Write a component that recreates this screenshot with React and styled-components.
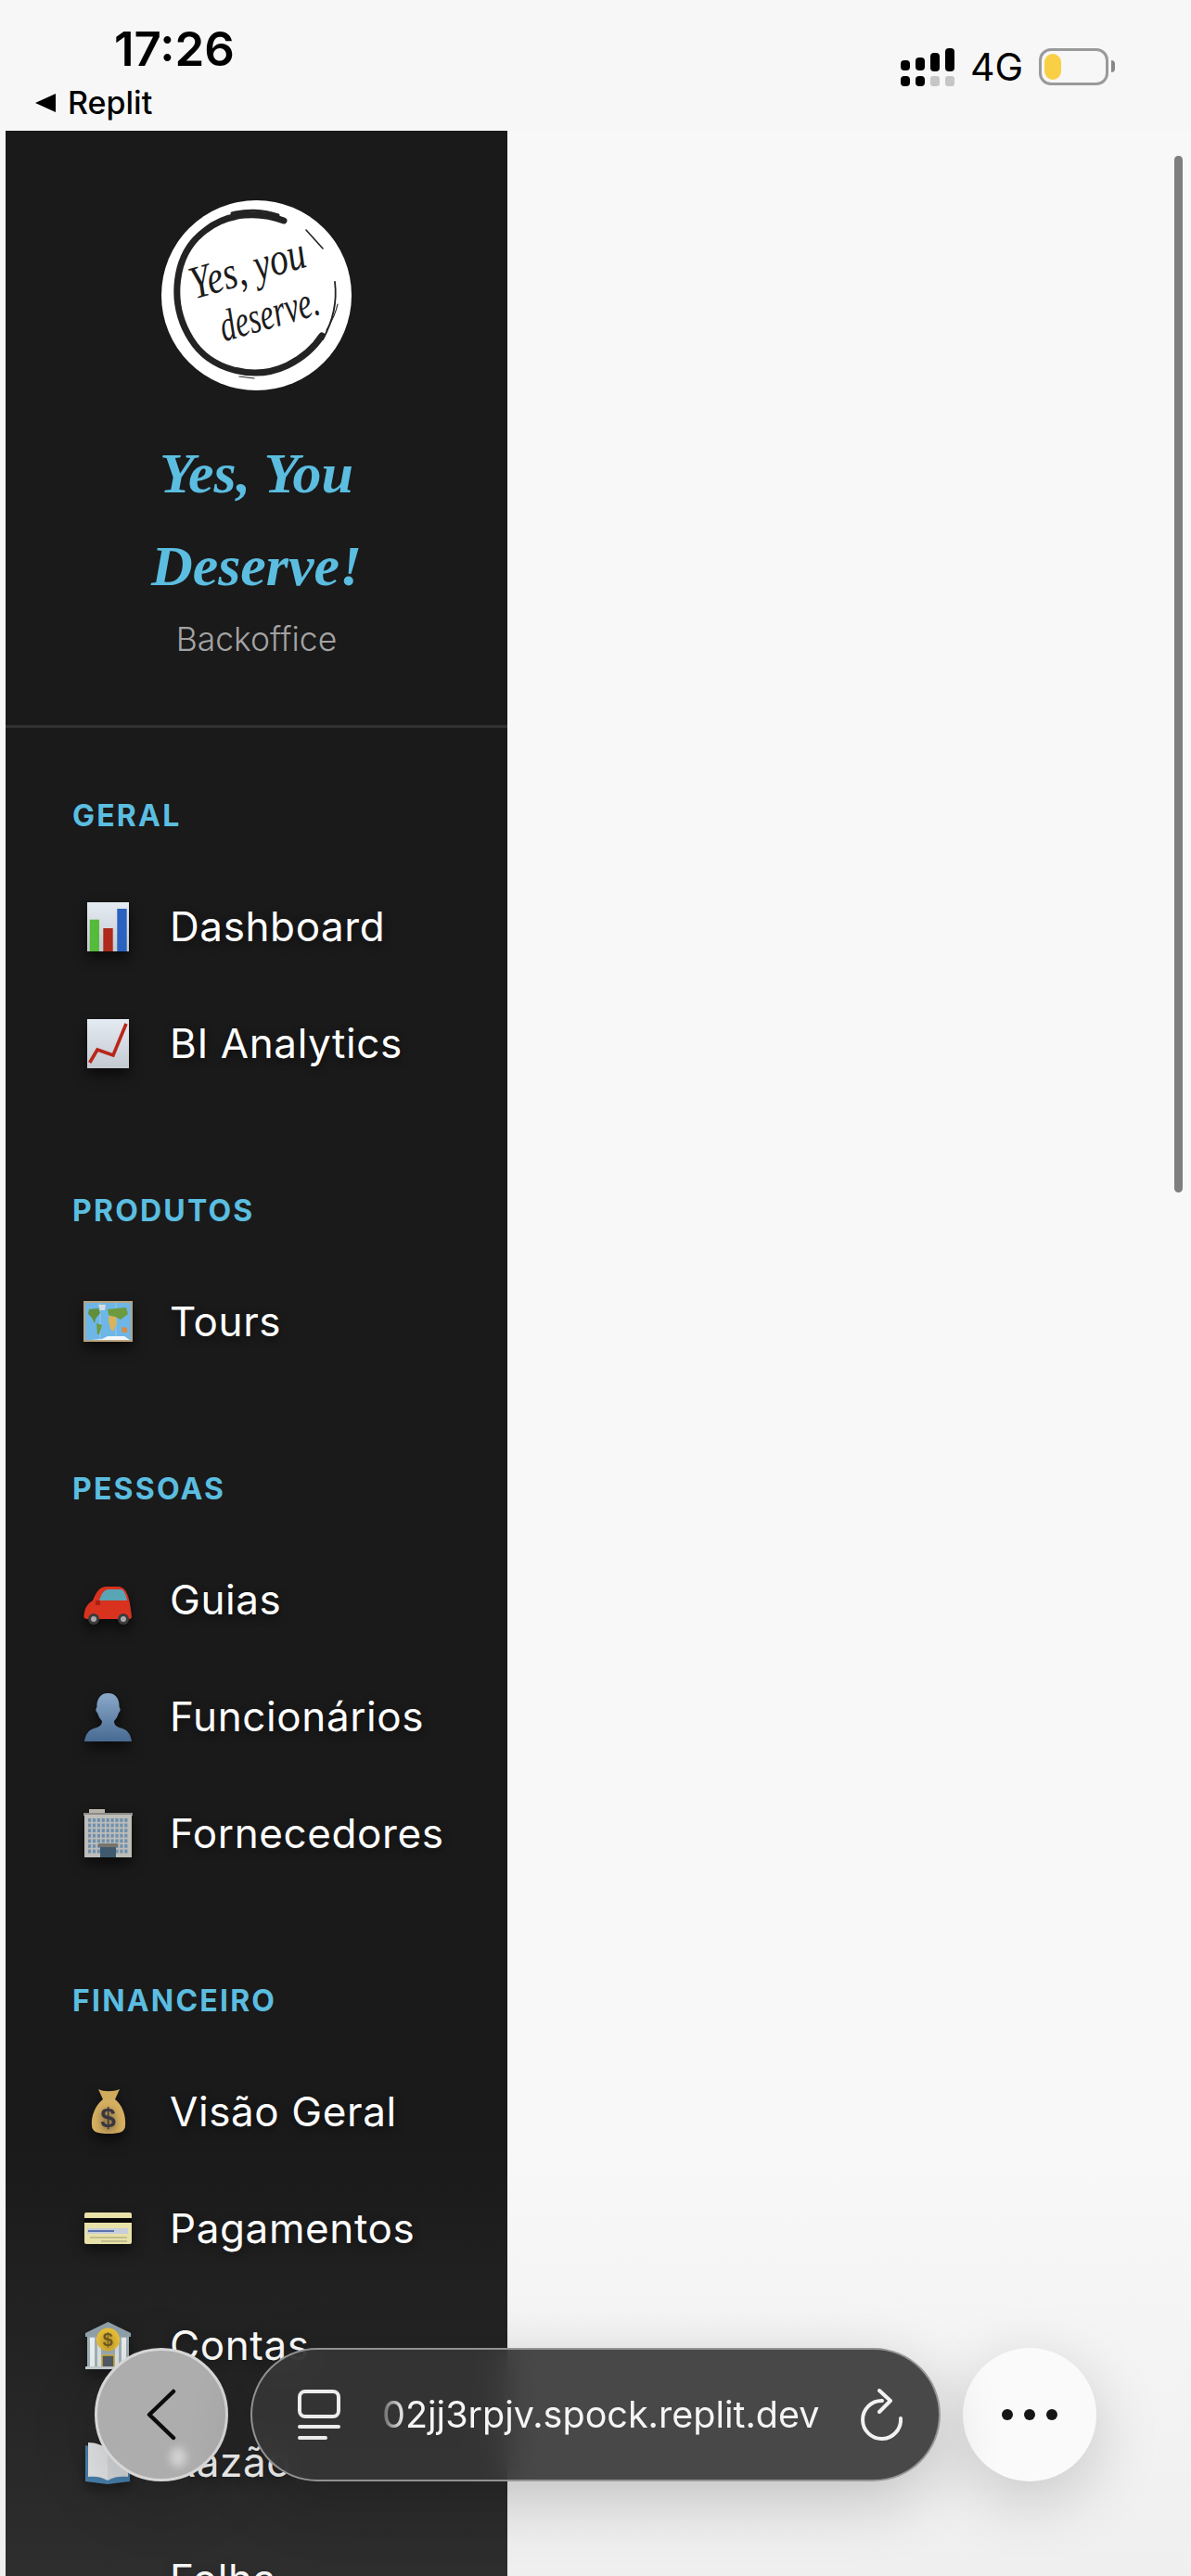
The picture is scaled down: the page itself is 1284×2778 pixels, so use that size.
import React from "react";
import styled, { createGlobalStyle } from "styled-components";

const ACCENT = "#5bbde0";
const SANS = `"Inter", "Liberation Sans", sans-serif`;

const Global = createGlobalStyle`
	html, body {
		margin: 0;
		padding: 0;
		background: #f8f8f8;
	}
	* {
		box-sizing: border-box;
	}
`;

const Page = styled.div`
	position: relative;
	width: 1284px;
	height: 2778px;
	overflow: hidden;
	background: #f8f8f8;
	font-family: ${SANS};
`;

const StatusBar = styled.header`
	display: flex;
	justify-content: space-between;
	height: 141px;
	background: #f7f7f7;
	color: #000;
`;

const StatusLeft = styled.div`
	display: flex;
	flex-direction: column;
	padding: 22px 0 0 38px;
`;

const Clock = styled.div`
	margin-left: 85px;
	font-size: 51px;
	line-height: 62px;
	font-weight: 600;
`;

const BackLink = styled.div`
	display: flex;
	align-items: center;
	gap: 13px;
	margin-top: -1px;
	font-size: 34px;
	line-height: 56px;
	font-weight: 500;
`;

const BackArrow = styled.span`
	width: 0;
	height: 0;
	border-style: solid;
	border-width: 10px 22px 10px 0;
	border-color: transparent #000 transparent transparent;
`;

const StatusRight = styled.div`
	display: flex;
	align-items: flex-start;
	padding: 52px 89px 0 0;
`;

const NetworkLabel = styled.span`
	margin: -1px 17px 0 17px;
	font-size: 41px;
	line-height: 42px;
	font-weight: 400;
`;

const Battery = styled.div`
	position: relative;
	width: 75px;
	height: 40px;
	padding: 3px;
	border: 3px solid #9a9a9a;
	border-radius: 13px;
	&::after {
		content: "";
		position: absolute;
		top: 10px;
		right: -10px;
		width: 4px;
		height: 13px;
		border-radius: 0 5px 5px 0;
		background: #888;
	}
`;

const BatteryLevel = styled.div`
	width: 18px;
	height: 100%;
	border-radius: 9px;
	background: #f9d045;
`;

const Sidebar = styled.aside`
	width: 541px;
	height: 2637px;
	margin-left: 6px;
	overflow: hidden;
	background: #1a1a1a;
`;

const Brand = styled.div`
	display: flex;
	flex-direction: column;
	align-items: center;
	height: 644px;
	padding-top: 75px;
	border-bottom: 3px solid #323232;
`;

const BrandTitle = styled.h1`
	margin: 39px 0 0;
	font-family: "Liberation Serif", serif;
	font-style: italic;
	font-weight: 700;
	font-size: 62px;
	line-height: 100px;
	text-align: center;
	color: ${ACCENT};
`;

const BrandSub = styled.div`
	margin-top: 8px;
	font-size: 35.5px;
	line-height: 44px;
	font-weight: 300;
	color: #a3a3a3;
`;

const Nav = styled.nav`
	display: flex;
	flex-direction: column;
	gap: 98px;
	padding-top: 75px;
`;

const SectionLabel = styled.div`
	height: 40px;
	margin-bottom: 36px;
	padding-left: 72px;
	font-size: 32px;
	line-height: 40px;
	font-weight: 700;
	letter-spacing: 2.2px;
	color: ${ACCENT};
`;

const Row = styled.div`
	display: flex;
	align-items: center;
	gap: 40px;
	height: 126px;
	padding-left: 84px;
	font-size: 44px;
	letter-spacing: 0.6px;
	font-weight: 400;
	color: #fff;
	text-shadow: 0 3px 10px rgba(0, 0, 0, 0.55);
`;

const IconBox = styled.span`
	display: flex;
	justify-content: center;
	align-items: center;
	flex: none;
	width: 53px;
	height: 53px;
	filter: drop-shadow(0 7px 7px rgba(0, 0, 0, 0.6));
`;

const Scrollbar = styled.div`
	position: absolute;
	top: 168px;
	right: 9px;
	width: 9px;
	height: 1118px;
	border-radius: 5px;
	background: #7e7e7e;
`;

const BottomFade = styled.div`
	position: absolute;
	left: 0;
	right: 0;
	bottom: 0;
	height: 460px;
	pointer-events: none;
	background: linear-gradient(to bottom, rgba(180, 180, 180, 0), rgba(180, 180, 180, 0.13));
`;

const BrowserBar = styled.div`
	position: absolute;
	left: 102px;
	bottom: 102px;
	display: flex;
	align-items: center;
	gap: 24px;
`;

const RoundButton = styled.div`
	display: flex;
	justify-content: center;
	align-items: center;
	width: 144px;
	height: 144px;
	border-radius: 50%;
	background: ${(p) => p.$bg};
	border: ${(p) => p.$border};
	box-shadow: 0 20px 70px rgba(0, 0, 0, 0.18);
`;

const BackRound = styled(RoundButton)`
	position: relative;
	&::after {
		content: "";
		position: absolute;
		left: 78px;
		top: 104px;
		width: 18px;
		height: 22px;
		border-radius: 50%;
		background: rgba(255, 255, 255, 0.45);
		filter: blur(4px);
	}
`;

const UrlPill = styled.div`
	display: flex;
	align-items: center;
	width: 744px;
	height: 144px;
	padding-left: 49px;
	border-radius: 72px;
	background: rgba(53, 53, 53, 0.9);
	backdrop-filter: blur(18px);
	border: 2px solid rgba(170, 170, 170, 0.8);
	box-shadow: 0 20px 70px rgba(0, 0, 0, 0.2);
	color: #f5f5f5;
`;

const UrlText = styled.div`
	width: 474px;
	margin: 0 41px 0 45px;
	overflow: hidden;
	white-space: nowrap;
	font-size: 39.5px;
	font-weight: 400;
	-webkit-mask-image: linear-gradient(to right, rgba(0, 0, 0, 0.25), #000 24px);
	mask-image: linear-gradient(to right, rgba(0, 0, 0, 0.25), #000 24px);
`;

const Dots = styled.div`
	display: flex;
	gap: 12px;
`;

const Dot = styled.span`
	width: 12px;
	height: 12px;
	border-radius: 50%;
	background: #161616;
`;

const SignalIcon = () => (
	<svg width="58" height="42" viewBox="0 0 58 42" fill="#000">
		<rect x="0" y="13" width="10" height="11" rx="4" />
		<rect x="16" y="10" width="10" height="14" rx="4" />
		<rect x="32" y="5" width="10" height="20" rx="4" />
		<rect x="48" y="0" width="10" height="25" rx="4" />
		<rect x="0" y="30" width="10" height="11" rx="4" />
		<rect x="16" y="30" width="10" height="11" rx="4" />
		<rect x="32" y="30" width="10" height="11" rx="3" fill="#c6c6c6" />
		<rect x="48" y="30" width="10" height="11" rx="3" fill="#c6c6c6" />
	</svg>
);

const LogoMark = () => (
	<svg width="205" height="205" viewBox="0 0 205 205">
		<circle cx="102.5" cy="102.5" r="102.5" fill="#fff" />
		<g fill="none" stroke="#232323" strokeLinecap="round">
			<path d="M132 22 C106 12 72 13 48 32 C12 58 8 112 32 150 C52 182 98 196 136 178 C152 170 164 160 173 146" strokeWidth="7" />
			<path d="M76 14 C90 10 110 10 126 16" strokeWidth="3" />
			<path d="M156 32 L174 52" strokeWidth="1.6" />
			<path d="M187 88 C190 112 184 132 174 150" strokeWidth="1.8" />
			<path d="M178 140 C184 130 188 122 190 112" strokeWidth="1.2" />
			<path d="M84 190 L100 192" strokeWidth="1.2" />
		</g>
		<g fill="#1c1c1c" fontFamily="Liberation Serif, serif" fontStyle="italic" transform="rotate(-16 102 102)">
			<text x="101" y="88" fontSize="50" textAnchor="middle" textLength="128" lengthAdjust="spacingAndGlyphs">Yes, you</text>
			<text x="110" y="141" fontSize="48" textAnchor="middle" textLength="110" lengthAdjust="spacingAndGlyphs">deserve.</text>
		</g>
	</svg>
);

const BarsIcon = () => (
	<svg width="45" height="53" viewBox="0 0 45 53">
		<defs>
			<linearGradient id="paper" x1="0" y1="0" x2="0" y2="1">
				<stop offset="0" stopColor="#e4ebf2" />
				<stop offset="1" stopColor="#c3cad2" />
			</linearGradient>
		</defs>
		<rect width="45" height="53" fill="url(#paper)" />
		<rect x="2.7" y="18.7" width="10.3" height="34.3" fill="#56bb3a" />
		<rect x="17.3" y="28" width="10.4" height="25" fill="#ae2a1a" />
		<rect x="32.3" y="7" width="10.4" height="46" fill="#2a62bf" />
	</svg>
);

const TrendIcon = () => (
	<svg width="45" height="53" viewBox="0 0 45 53">
		<rect width="45" height="53" fill="url(#paper)" />
		<path d="M2.7 47 L11 33 L28 39 L42 5" fill="none" stroke="#b8271a" strokeWidth="3.6" />
	</svg>
);

const MapIcon = () => (
	<svg width="53" height="44" viewBox="0 0 53 44">
		<rect x="1" y="1" width="51" height="42" fill="#6eb6e6" stroke="#b9a37f" strokeWidth="2" />
		<path d="M18 2 V42 M35 2 V42" stroke="#fff" strokeOpacity="0.25" strokeWidth="1" />
		<path d="M6 9 L16 8 L18 13 L13 19 L12 24 L9 18 L5 14 Z" fill="#5f8f3a" />
		<path d="M14 24 L20 26 L17 36 L15 36 Z" fill="#6c9a3f" />
		<path d="M16 4 L24 4 L23 10 L18 10 Z" fill="#d5dde0" />
		<path d="M26 9 L46 7 L48 14 L40 20 L36 18 L32 17 L27 15 Z" fill="#6c9a3f" />
		<path d="M27 16 L35 17 L36 24 L32 33 L29 30 L27 22 Z" fill="#d8b45a" />
		<path d="M41 28 L47 29 L47 34 L42 34 Z" fill="#e08a3a" />
		<path d="M8 42 L20 41 L26 38 L44 38 L50 42 Z" fill="#f4f7f9" />
	</svg>
);

const CarIcon = () => (
	<svg width="53" height="53" viewBox="0 0 53 53">
		<path d="M10 27 C14 17 18 12 25 12 L37 12 C45 12 48 20 50 30 L52 44 C52 47 50 47 48 47 L4 47 C0 47 0 44 1 40 C2 34 5 30 10 27 Z" fill="#d9321e" />
		<path d="M17 27 C19 20 22 15 27 15 L40 15 C44 15 46 22 47 27 Z" fill="#59a4b5" />
		<rect x="13" y="27" width="5" height="5" rx="1" fill="#a81f12" />
		<circle cx="11" cy="47" r="6" fill="#3b3b3b" />
		<circle cx="11" cy="47" r="3" fill="#a9a9a9" />
		<circle cx="43" cy="47" r="6" fill="#3b3b3b" />
		<circle cx="43" cy="47" r="3" fill="#a9a9a9" />
	</svg>
);

const PersonIcon = () => (
	<svg width="53" height="53" viewBox="0 0 53 53">
		<defs>
			<linearGradient id="bust" x1="0" y1="0" x2="0" y2="1">
				<stop offset="0" stopColor="#8aa9ca" />
				<stop offset="1" stopColor="#486a92" />
			</linearGradient>
		</defs>
		<path d="M26.5 1 C36 1 39 9 38.5 16 C40 17 40 21 38 22 C37 26 35 29 33 31 C33 36 37 38 42 39 C48 41 51 46 52 53 L1 53 C2 46 5 41 11 39 C16 38 20 36 20 31 C18 29 16 26 15 22 C13 21 13 17 14.5 16 C14 9 17 1 26.5 1 Z" fill="url(#bust)" />
	</svg>
);

const BuildingIcon = () => {
	const windows = [];
	for (let r = 0; r < 7; r++) {
		for (let c = 0; c < 9; c++) {
			if (r > 4 && c > 2 && c < 6) continue;
			windows.push(<rect key={`${r}-${c}`} x={5 + c * 4.9} y={10 + r * 5.6} width="3.2" height="3.8" fill="#6f90ad" />);
		}
	}
	return (
		<svg width="53" height="53" viewBox="0 0 53 53">
			<rect x="6" y="0" width="17" height="5" fill="#b8b3aa" />
			<rect x="0" y="4" width="53" height="3" fill="#8b8a86" />
			<rect x="1" y="6" width="51" height="46" fill="#bdbdb9" />
			{windows}
			<rect x="16" y="37" width="21" height="4" fill="#77746e" />
			<rect x="18" y="41" width="17" height="11" fill="#3f5a6e" />
		</svg>
	);
};

const BagIcon = () => (
	<svg width="38" height="50" viewBox="0 0 38 50">
		<path d="M8 1 C14 4 24 4 31 1 L26 12 L13 12 Z" fill="#d0ab5c" />
		<path d="M13 12 L26 12 C34 18 38 30 37 40 C37 47 31 49 19 49 C7 49 1 47 1 40 C0 30 5 18 13 12 Z" fill="#d6b062" />
		<text x="19" y="42" textAnchor="middle" fontFamily="Liberation Sans, sans-serif" fontWeight="700" fontSize="30" fill="#3a3640">$</text>
	</svg>
);

const CardIcon = () => (
	<svg width="51" height="34" viewBox="0 0 51 34">
		<rect width="51" height="34" rx="2" fill="#e9e2a8" />
		<rect y="6" width="51" height="5" fill="#050505" />
		<rect x="3" y="17" width="44" height="6" fill="#c8cfdb" />
		<path d="M4 20 H32" stroke="#5a72b0" strokeWidth="2" />
		<path d="M6 27 H46 M18 31 H46" stroke="#b8b183" strokeWidth="1.6" />
	</svg>
);

const BankIcon = () => (
	<svg width="53" height="53" viewBox="0 0 53 53">
		<path d="M26.5 1 L51 13 L51 17 L2 17 L2 13 Z" fill="#8d9fa8" />
		<rect x="4" y="17" width="45" height="33" fill="#9fb0b8" />
		<rect x="7" y="18" width="5" height="32" fill="#eef1f2" />
		<rect x="41" y="18" width="5" height="32" fill="#eef1f2" />
		<rect x="15" y="18" width="4" height="32" fill="#dfe4e6" />
		<rect x="34" y="18" width="4" height="32" fill="#dfe4e6" />
		<rect x="20" y="37" width="13" height="13" fill="#4b5560" stroke="#d8b030" strokeWidth="1.5" />
		<rect x="2" y="49" width="49" height="3" fill="#c7cfd3" />
		<circle cx="26.5" cy="20" r="12.5" fill="#eec02f" />
		<text x="26.5" y="27" textAnchor="middle" fontFamily="Liberation Sans, sans-serif" fontWeight="700" fontSize="20" fill="#6a5418">$</text>
	</svg>
);

const BookIcon = () => (
	<svg width="53" height="53" viewBox="0 0 53 53">
		<path d="M2 8 L26 14 L50 8 V47 L26 50 L2 47 Z" fill="#3b78a8" />
		<path d="M5 5 C13 5 22 8 26 13 V46 C20 42 12 41 5 42 Z" fill="#e6e8ea" />
		<path d="M48 5 C40 5 31 8 26 13 V46 C32 42 40 41 48 42 Z" fill="#d8dbde" />
	</svg>
);

const LayoutIcon = () => (
	<svg width="46" height="54" viewBox="0 0 46 54" fill="none" stroke="#ececec" strokeWidth="4" strokeLinecap="round">
		<rect x="2" y="2" width="42" height="27" rx="6" />
		<path d="M2 40 H44 M2 52 H30" />
	</svg>
);

const ReloadIcon = () => (
	<svg width="46" height="56" viewBox="0 0 46 56" fill="none" stroke="#f2f2f2" strokeWidth="4" strokeLinecap="round" strokeLinejoin="round">
		<path d="M24 13 A20.5 20.5 0 1 0 44 32" />
		<path d="M21 2 L33 13 L21 25" />
	</svg>
);

const ChevronIcon = () => (
	<svg width="32" height="56" viewBox="0 0 32 56" fill="none" stroke="#0c0c0c" strokeWidth="4.5" strokeLinecap="round" strokeLinejoin="round">
		<path d="M29 3 L3 28 L29 53" />
	</svg>
);

const sections = [
	{
		title: "GERAL",
		items: [
			{ label: "Dashboard", Icon: BarsIcon },
			{ label: "BI Analytics", Icon: TrendIcon }
		]
	},
	{ title: "PRODUTOS", items: [{ label: "Tours", Icon: MapIcon }] },
	{
		title: "PESSOAS",
		items: [
			{ label: "Guias", Icon: CarIcon },
			{ label: "Funcionários", Icon: PersonIcon },
			{ label: "Fornecedores", Icon: BuildingIcon }
		]
	},
	{
		title: "FINANCEIRO",
		items: [
			{ label: "Visão Geral", Icon: BagIcon },
			{ label: "Pagamentos", Icon: CardIcon },
			{ label: "Contas", Icon: BankIcon },
			{ label: "Razão", Icon: BookIcon },
			{ label: "Folha" }
		]
	}
];

export default function App() {
	return (
		<Page>
			<Global />
			<StatusBar>
				<StatusLeft>
					<Clock>17:26</Clock>
					<BackLink>
						<BackArrow />
						Replit
					</BackLink>
				</StatusLeft>
				<StatusRight>
					<SignalIcon />
					<NetworkLabel>4G</NetworkLabel>
					<Battery>
						<BatteryLevel />
					</Battery>
				</StatusRight>
			</StatusBar>
			<Sidebar>
				<Brand>
					<LogoMark />
					<BrandTitle>
						Yes, You
						<br />
						Deserve!
					</BrandTitle>
					<BrandSub>Backoffice</BrandSub>
				</Brand>
				<Nav>
					{sections.map((section) => (
						<section key={section.title}>
							<SectionLabel>{section.title}</SectionLabel>
							{section.items.map(({ label, Icon }) => (
								<Row key={label}>
									<IconBox>{Icon && <Icon />}</IconBox>
									{label}
								</Row>
							))}
						</section>
					))}
				</Nav>
			</Sidebar>
			<Scrollbar />
			<BottomFade />
			<BrowserBar>
				<BackRound $bg="#adadad" $border="3px solid #d6d6d6">
					<ChevronIcon />
				</BackRound>
				<UrlPill>
					<LayoutIcon />
					<UrlText>02jj3rpjv.spock.replit.dev</UrlText>
					<ReloadIcon />
				</UrlPill>
				<RoundButton $bg="#fafafa" $border="none">
					<Dots>
						<Dot />
						<Dot />
						<Dot />
					</Dots>
				</RoundButton>
			</BrowserBar>
		</Page>
	);
}
